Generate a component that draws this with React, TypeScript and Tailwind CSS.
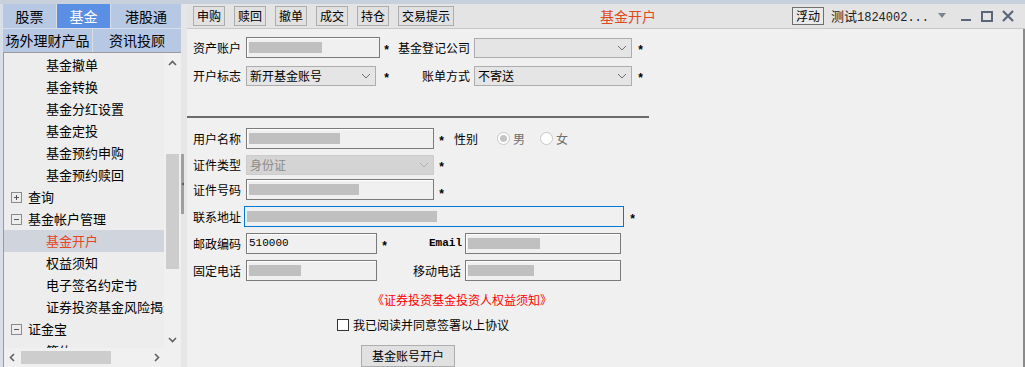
import React from "react";

const FONT = "font-['Noto_Sans_CJK_SC','Liberation_Sans',sans-serif]";

type TreeItem = { text: string; level: 0 | 1; icon?: "plus" | "minus"; active?: boolean };

const treeItems: TreeItem[] = [
  { text: "基金撤单", level: 1 },
  { text: "基金转换", level: 1 },
  { text: "基金分红设置", level: 1 },
  { text: "基金定投", level: 1 },
  { text: "基金预约申购", level: 1 },
  { text: "基金预约赎回", level: 1 },
  { text: "查询", level: 0, icon: "plus" },
  { text: "基金帐户管理", level: 0, icon: "minus" },
  { text: "基金开户", level: 1, active: true },
  { text: "权益须知", level: 1 },
  { text: "电子签名约定书", level: 1 },
  { text: "证券投资基金风险揭示书", level: 1 },
  { text: "证金宝", level: 0, icon: "minus" },
  { text: "签约", level: 1 },
];

function BoxIcon({ kind }: { kind: "plus" | "minus" }) {
  return (
    <svg width="11" height="11" viewBox="0 0 11 11" className="flex-shrink-0">
      <rect x="0.5" y="0.5" width="10" height="10" fill="none" stroke="#8a8a8a" />
      <path d="M3 5.5h5" stroke="#555" />
      {kind === "plus" && <path d="M5.5 3v5" stroke="#555" />}
    </svg>
  );
}

function Chevron({ dir, color = "#606060" }: { dir: "up" | "down" | "left" | "right"; color?: string }) {
  const d = {
    up: "M2 7l3.5-3.5L9 7",
    down: "M2 4l3.5 3.5L9 4",
    left: "M7 2L3.5 5.5 7 9",
    right: "M4 2l3.5 3.5L4 9",
  }[dir];
  return (
    <svg width="11" height="11" viewBox="0 0 11 11">
      <path d={d} fill="none" stroke={color} strokeWidth="1.6" />
    </svg>
  );
}

function Sidebar() {
  return (
    <aside className="w-[181px] flex-shrink-0 flex flex-col bg-[#d9dfe9]">
      <div className="flex gap-[1px] pl-[3px] h-[24px]">
        <div className="w-[53px] bg-[#b6c8e4] flex items-center justify-center text-[14px] text-black">股票</div>
        <div className="w-[53px] bg-[#5b8fe3] flex items-center justify-center text-[14px] text-white">基金</div>
        <div className="flex-1 bg-[#b6c8e4] flex items-center justify-center text-[14px] text-black">港股通</div>
      </div>
      <div className="flex gap-[1px] pl-[3px] mt-[1px] h-[23px]">
        <div className="w-[89px] bg-[#b6c8e4] flex items-center justify-center text-[14px] text-black">场外理财产品</div>
        <div className="flex-1 bg-[#b6c8e4] flex items-center justify-center text-[14px] text-black">资讯投顾</div>
      </div>
      <div className="ml-[3px] flex-1 flex flex-col border-l border-t border-[#9a9a9a] bg-[#ededed] overflow-hidden">
        <div className="flex flex-1 min-h-0">
          <div className="flex-1 min-w-0 overflow-hidden pt-[1px]">
            {treeItems.map((it) => (
              <div
                key={it.text}
                className={`h-[22px] flex items-center whitespace-nowrap text-[13px] ${it.active ? "bg-[#cfd4dd] text-[#e5461c]" : "text-black"}`}
              >
                {it.level === 0 ? (
                  <div className="flex items-center gap-[6px] pl-[7px]">
                    <BoxIcon kind={it.icon ?? "plus"} />
                    <span>{it.text}</span>
                  </div>
                ) : (
                  <span className="pl-[42px]">{it.text}</span>
                )}
              </div>
            ))}
          </div>
          <div className="w-[17px] flex-shrink-0 bg-[#f0f0f0] flex flex-col items-center">
            <div className="h-[17px] flex items-center justify-center mt-[2px]">
              <Chevron dir="up" />
            </div>
            <div className="w-[13px] h-[115px] mt-[82px] bg-[#cdcdcd]" />
            <div className="flex-1" />
            <div className="h-[17px] flex items-center justify-center">
              <Chevron dir="down" />
            </div>
          </div>
        </div>
        <div className="h-[19px] flex-shrink-0 bg-[#f0f0f0] flex items-center">
          <div className="w-[17px] flex justify-center"><Chevron dir="left" /></div>
          <div className="w-[90px] h-[13px] bg-[#cdcdcd]" />
          <div className="w-[37px]" />
          <div className="w-[17px] flex justify-center"><Chevron dir="right" /></div>
          <div className="flex-1 h-full bg-[#f0f0f0]" />
        </div>
      </div>
    </aside>
  );
}

function Star() {
  return <span className="text-[12px] font-bold text-black font-['Liberation_Mono',monospace]">*</span>;
}

function TextBox({
  w,
  blur,
  value,
  focus,
}: {
  w: string;
  blur?: string;
  value?: string;
  focus?: boolean;
}) {
  return (
    <div
      className={`${w} h-[21px] flex items-center px-[2px] border ${focus ? "border-[#0078d7]" : "border-[#7a7a7a] shadow-[inset_1px_1px_0_#ffffff]"} bg-[#f0f0f0]`}
    >
      {blur && <span className={`${blur} h-[11px] bg-[#c0c0c0]`} />}
      {value && <span className="text-[11px] font-['Liberation_Mono',monospace] text-black">{value}</span>}
    </div>
  );
}

function SelectBox({ w, value, disabled }: { w: string; value?: string; disabled?: boolean }) {
  return (
    <div
      className={`${w} h-[20px] flex items-center justify-between pl-[3px] pr-[4px] border ${disabled ? "border-[#cccccc] bg-[#d4d4d4] text-[#8a8a8a]" : "border-[#adadad] bg-[#e5e5e5] text-black"} text-[12px]`}
    >
      <span>{value}</span>
      <svg width="10" height="6" viewBox="0 0 10 6">
        <path d="M1 1l4 4 4-4" fill="none" stroke={disabled ? "#b0b0b0" : "#707070"} strokeWidth="1" />
      </svg>
    </div>
  );
}

function Label({ children, w = "w-[53px]", right }: { children: React.ReactNode; w?: string; right?: boolean }) {
  return <span className={`${w} flex-shrink-0 text-[12px] text-black ${right ? "text-right pr-[4px]" : ""}`}>{children}</span>;
}

function Radio({ label, checked }: { label: string; checked?: boolean }) {
  return (
    <div className="flex items-center gap-[3px]">
      <span className="w-[13px] h-[13px] rounded-full border border-[#c8c8c8] bg-white flex items-center justify-center">
        {checked && <span className="w-[7px] h-[7px] rounded-full bg-[#c4c4c4]" />}
      </span>
      <span className="text-[12px] text-[#6d6d6d]">{label}</span>
    </div>
  );
}

function Toolbar() {
  const buttons = ["申购", "赎回", "撤单", "成交", "持仓", "交易提示"];
  return (
    <div className="h-[25px] flex-shrink-0 flex items-center bg-[#e4e4e4] border-b border-[#c8c8c8] pl-[6px]">
      <div className="flex gap-[9px]">
        {buttons.map((b) => (
          <button
            key={b}
            className="h-[20px] px-[3px] border border-[#adadad] bg-[#e1e1e1] text-[12px] text-black leading-none"
          >
            {b}
          </button>
        ))}
      </div>
      <div className="flex-1 text-center text-[14px] text-[#e04a1a] pl-[10px]">基金开户</div>
      <div className="flex items-center pr-[8px]">
        <button className="h-[18px] px-[3px] border border-[#6f6f6f] bg-[#e9e9e9] text-[12px] text-black leading-none">浮动</button>
        <span className="ml-[7px] text-[13px] text-[#222]">
          测试<span className="font-['Liberation_Mono',monospace] text-[12px]">1824002...</span>
        </span>
        <svg width="10" height="6" viewBox="0 0 10 6" className="ml-[8px]">
          <path d="M1 0h8L5 5z" fill="#7a8494" />
        </svg>
        <div className="ml-[10px] w-[18px] h-[20px] flex items-end justify-center pb-[5px]">
          <span className="w-[10px] h-[2px] bg-[#5b6679]" />
        </div>
        <div className="ml-[3px] w-[18px] h-[20px] flex items-center justify-center">
          <span className="w-[12px] h-[11px] border-2 border-[#5b6679]" />
        </div>
        <div className="ml-[3px] w-[18px] h-[20px] flex items-center justify-center">
          <svg width="12" height="12" viewBox="0 0 12 12">
            <path d="M1 1l10 10M11 1L1 11" stroke="#5b6679" strokeWidth="2.2" />
          </svg>
        </div>
      </div>
    </div>
  );
}

function Form() {
  return (
    <div className="flex-1 flex flex-col bg-[#f0f0f0] border-r-2 border-[#8a8a8a] pl-[6px] pt-[8px]">
      {/* 账户信息 */}
      <div className="flex items-center h-[21px]">
        <Label>资产账户</Label>
        <TextBox w="w-[134px]" blur="w-[73px]" />
        <span className="w-[12px] pl-[3px]"><Star /></span>
        <Label w="w-[82px]" right>基金登记公司</Label>
        <SelectBox w="w-[158px]" />
        <span className="pl-[5px]"><Star /></span>
      </div>
      <div className="flex items-center h-[21px] mt-[7px]">
        <Label>开户标志</Label>
        <SelectBox w="w-[130px]" value="新开基金账号" />
        <span className="w-[16px] pl-[7px]"><Star /></span>
        <Label w="w-[82px]" right>账单方式</Label>
        <SelectBox w="w-[158px]" value="不寄送" />
        <span className="pl-[5px]"><Star /></span>
      </div>

      <div className="ml-[-6px] w-[462px] h-[2px] bg-[#6b6b6b] mt-[30px]" />

      {/* 客户资料 */}
      <div className="flex items-center h-[21px] mt-[10px]">
        <Label>用户名称</Label>
        <TextBox w="w-[188px]" blur="w-[91px]" />
        <span className="w-[20px] pl-[4px]"><Star /></span>
        <span className="text-[12px] text-black w-[43px]">性别</span>
        <div className="flex items-center gap-[15px]">
          <Radio label="男" checked />
          <Radio label="女" />
        </div>
      </div>
      <div className="flex items-center h-[21px] mt-[5px]">
        <Label>证件类型</Label>
        <SelectBox w="w-[188px]" value="身份证" disabled />
        <span className="pl-[4px]"><Star /></span>
      </div>
      <div className="flex items-center h-[21px] mt-[4px]">
        <Label>证件号码</Label>
        <TextBox w="w-[188px]" blur="w-[110px]" />
        <span className="pl-[4px] pt-[3px]"><Star /></span>
      </div>
      <div className="flex items-center h-[21px] mt-[6px]">
        <Label w="w-[51px]">联系地址</Label>
        <TextBox w="w-[380px]" blur="w-[190px]" focus />
        <span className="pl-[5px]"><Star /></span>
      </div>
      <div className="flex items-center h-[21px] mt-[6px]">
        <Label>邮政编码</Label>
        <TextBox w="w-[131px]" value="510000" />
        <span className="w-[12px] pl-[4px]"><Star /></span>
        <span className="w-[76px] text-right pr-[3px] text-[11px] font-bold text-black font-['Liberation_Mono',monospace]">Email</span>
        <TextBox w="w-[156px]" blur="w-[72px]" />
      </div>
      <div className="flex items-center h-[21px] mt-[6px]">
        <Label>固定电话</Label>
        <TextBox w="w-[131px]" blur="w-[52px]" />
        <span className="w-[12px]" />
        <Label w="w-[76px]" right>移动电话</Label>
        <TextBox w="w-[156px]" blur="w-[66px]" />
      </div>

      <div className="mt-[10px] h-[18px] text-[12px] text-[#ff0000] pl-[179px]">《证券投资基金投资人权益须知》</div>

      <div className="mt-[8px] flex items-center gap-[4px] pl-[144px] h-[16px]">
        <span className="w-[12px] h-[12px] border border-[#333] bg-white" />
        <span className="text-[12px] text-black">我已阅读并同意签署以上协议</span>
      </div>

      <div className="mt-[9px] pl-[168px]">
        <button className="w-[94px] h-[22px] border border-[#adadad] bg-[#e1e1e1] text-[12px] text-black leading-none">
          基金账号开户
        </button>
      </div>
    </div>
  );
}

export default function App() {
  return (
    <div className={`w-[1025px] h-[367px] flex flex-col overflow-hidden bg-[#f0f0f0] ${FONT}`}>
      <div className="h-[4px] flex-shrink-0 bg-[#c8d0dc]" />
      <div className="flex flex-1 min-h-0">
        <Sidebar />
        <div className="w-[6px] flex-shrink-0 bg-[#e6e6e6] flex flex-col items-start">
          <div className="mt-[150px] w-[3px] h-[60px] bg-[#9f9f9f] flex items-center">
            <svg width="4" height="6" viewBox="0 0 4 6" className="ml-[1px]">
              <path d="M3 0v6L0 3z" fill="#222" />
            </svg>
          </div>
        </div>
        <main className="flex-1 flex flex-col min-w-0">
          <Toolbar />
          <Form />
        </main>
      </div>
    </div>
  );
}
